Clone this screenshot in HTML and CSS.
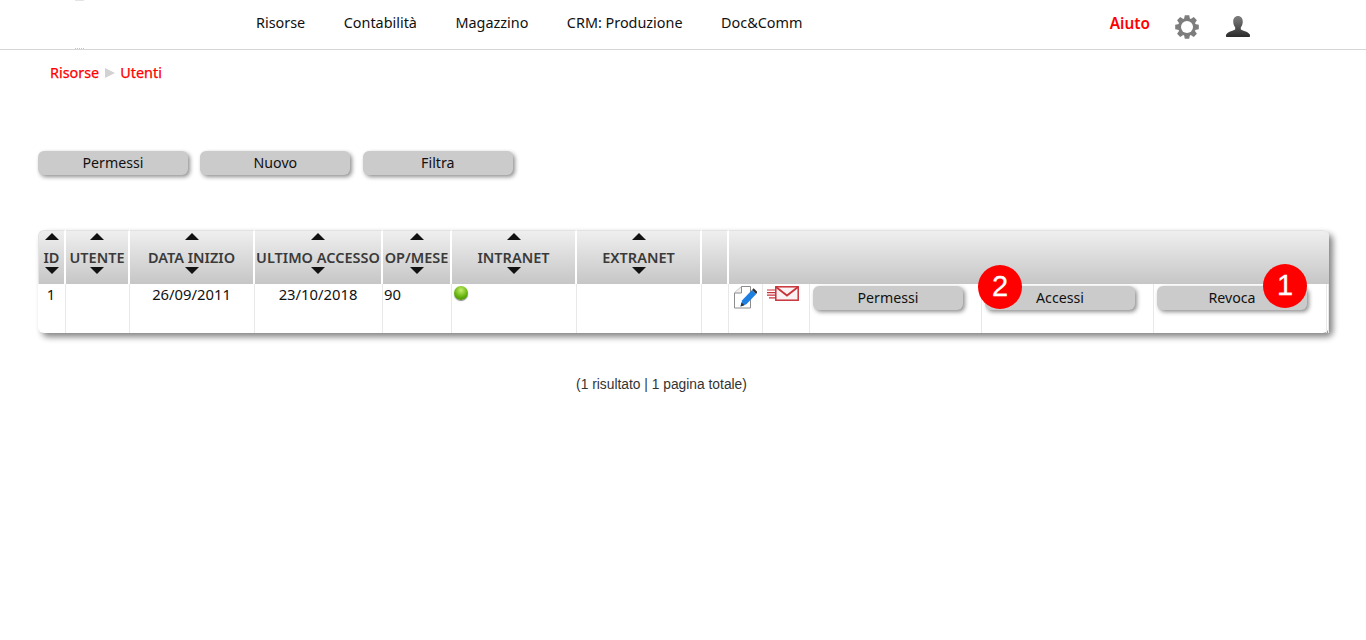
FILE: index.html
```html
<!DOCTYPE html>
<html lang="it">
<head>
<meta charset="utf-8">
<title>Utenti</title>
<link rel="stylesheet" href="styles.css">
</head>
<body>
<header class="topbar">
  <span class="logo-marks"></span>
  <nav class="mainnav">
    <a>Risorse</a><a>Contabilità</a><a>Magazzino</a><a>CRM: Produzione</a><a>Doc&amp;Comm</a>
  </nav>
  <div class="tools">
    <a class="help">Aiuto</a>
    <svg class="gear" width="26" height="26" viewBox="0 0 26 26"><g fill="#7d7d7d"><circle cx="13" cy="13" r="9"/><path d="M10.800 1.200h4.400l.8 4H10z"/><path d="M10.800 1.200h4.400l.8 4H10z" transform="rotate(45 13 13)"/><path d="M10.800 1.200h4.400l.8 4H10z" transform="rotate(90 13 13)"/><path d="M10.800 1.200h4.400l.8 4H10z" transform="rotate(135 13 13)"/><path d="M10.800 1.200h4.400l.8 4H10z" transform="rotate(180 13 13)"/><path d="M10.800 1.200h4.400l.8 4H10z" transform="rotate(225 13 13)"/><path d="M10.800 1.200h4.400l.8 4H10z" transform="rotate(270 13 13)"/><path d="M10.800 1.200h4.400l.8 4H10z" transform="rotate(315 13 13)"/></g><circle cx="13" cy="13" r="6" fill="#fff"/></svg>
    <svg class="user" width="26" height="24" viewBox="0 0 26 24"><defs><linearGradient id="ug" x1="0" y1="0" x2="0" y2="1"><stop offset="0" stop-color="#808080"/><stop offset="1" stop-color="#2b2b2b"/></linearGradient></defs><path fill="url(#ug)" d="M13 1c3 0 4.800 2.400 4.800 5.600 0 2.600-1 4.600-2 5.800v2c1 1 7.200 1.800 9 5.200.4.900.2 1.900-.1 2.400H1.300c-.3-.5-.5-1.500-.1-2.400 1.800-3.400 8-4.200 9-5.200v-2c-1-1.200-2-3.200-2-5.800C8.200 3.400 10 1 13 1z"/></svg>
  </div>
</header>
<div class="crumbs"><a>Risorse</a><span class="sep"></span><a>Utenti</a></div>
<div class="actions">
  <button class="btn">Permessi</button><button class="btn">Nuovo</button><button class="btn">Filtra</button>
</div>
<div class="tablewrap">
<table class="grid">
  <colgroup>
    <col class="c1"><col class="c2"><col class="c3"><col class="c4"><col class="c5"><col class="c6"><col class="c7"><col class="c8"><col class="c9"><col class="c10"><col class="c11"><col class="c12"><col class="c13"><col class="c14">
  </colgroup>
  <thead>
    <tr>
      <th><i class="up"></i><span>ID</span><i class="down"></i></th>
      <th><i class="up"></i><span>UTENTE</span><i class="down"></i></th>
      <th><i class="up"></i><span>DATA INIZIO</span><i class="down"></i></th>
      <th><i class="up"></i><span>ULTIMO ACCESSO</span><i class="down"></i></th>
      <th><i class="up"></i><span>OP/MESE</span><i class="down"></i></th>
      <th><i class="up"></i><span>INTRANET</span><i class="down"></i></th>
      <th><i class="up"></i><span>EXTRANET</span><i class="down"></i></th>
      <th></th>
      <th colspan="6" class="last"></th>
    </tr>
  </thead>
  <tbody>
    <tr>
      <td class="center">1</td>
      <td></td>
      <td class="center">26/09/2011</td>
      <td class="center">23/10/2018</td>
      <td>90</td>
      <td><i class="led"></i></td>
      <td></td>
      <td></td>
      <td class="ic"><svg width="24" height="26" viewBox="0 0 24 26"><path d="M8.500 1.500h9v21.500H1.500V8z" fill="#fff" stroke="#8c8c8c"/><path d="M8.500 1.500V8h-7" fill="#f0f0f0" stroke="#8c8c8c"/><path d="M7.500 21.500l1.700-6.200L19 5l4.200 4-9.800 10.300z" fill="#1f7fe0"/><path d="M19 5l1.600-1.700L24.500 7l-1.300 2z" fill="#333"/><path d="M7.500 21.500l1-4 3 2.700z" fill="#333"/></svg></td>
      <td class="ic"><svg width="32" height="18" viewBox="0 0 32 18"><g fill="none" stroke="#c8333a"><rect x="8.800" y="1.800" width="22.400" height="13.400" fill="#fbf3f3" stroke-width="1.500"/><path d="M9 2l11 8.500L31 2" stroke-width="1.800"/><path d="M0 5h9M0 7.600h9M0 10.200h9M2 12.800h7" stroke-width="1.200"/></g></svg></td>
      <td class="bc"><button class="btn">Permessi</button></td>
      <td class="bc"><button class="btn">Accessi</button></td>
      <td class="bc"><button class="btn">Revoca</button></td>
      <td></td>
    </tr>
  </tbody>
</table>
<span class="badge b1">1</span>
<span class="badge b2">2</span>
</div>
<p class="pager">(1 risultato | 1 pagina totale)</p>
</body>
</html>
```
FILE: styles.css
```css
* { box-sizing: border-box; }
html, body { margin: 0; padding: 0; background: #fff; }
body { font-family: "Noto Sans", "Open Sans", sans-serif; font-size: 14px; color: #111; min-height: 640px; overflow: hidden; }
.topbar { position: relative; height: 50px; border-bottom: 1px solid #d6d6d6; display: flex; align-items: center; justify-content: space-between; padding: 0 115px 0 256px; }
.logo-marks { position: absolute; left: 75px; top: 0; width: 9px; height: 49px; border-top: 1px solid #e4e4e4; border-bottom: 1px dotted #c4c4c4; }
.mainnav { display: flex; gap: 38.5px; font-size: 14.4px; margin-top: -4px; }
.tools { display: flex; align-items: center; }
.help { color: #f00; font-size: 15.4px; font-weight: 600; margin-right: 24px; margin-top: -2px; }
.gear { margin-right: 25px; margin-top: 4px; }
.user { margin-top: 5px; }
.crumbs { display: flex; align-items: center; color: #f00; padding-left: 50px; height: 20px; margin-top: 12px; font-size: 14.4px; -webkit-text-stroke: 0.25px #f00; }
.crumbs .sep { width: 0; height: 0; margin: 1px 5px 0 6px; border-left: 10px solid #d2d2d2; border-top: 5px solid transparent; border-bottom: 5px solid transparent; }
.actions { display: flex; gap: 12.4px; padding-left: 38px; margin-top: 69px; }
.btn { display: block; width: 150px; height: 24px; border: 0; padding: 0; background: #cbcbcb; border-radius: 6px; box-shadow: 2px 2px 4px #8f8f8f; font: inherit; font-size: 14.2px; color: #111; line-height: 24px; }
.tablewrap { position: relative; width: 1291px; height: 103px; margin: 55px 0 0 38px; border-radius: 6px; box-shadow: 4px 4px 6px #868686; background: #fff; }
.grid { table-layout: fixed; width: 1291px; border-collapse: separate; border-spacing: 0; }
.c1 { width: 28px; } .c2 { width: 64px; } .c3 { width: 125px; } .c4 { width: 128px; } .c5 { width: 69px; } .c6 { width: 125px; } .c7 { width: 125px; } .c8 { width: 27px; } .c9 { width: 34px; } .c10 { width: 47px; } .c11 { width: 172px; } .c12 { width: 172px; } .c13 { width: 173px; } .c14 { width: 2px; }
.grid th { height: 54px; padding: 0; background: linear-gradient(#efefef, #c6c6c6); border-right: 2px solid #fff; border-top: 1px solid #e2e2e2; font-size: 14.5px; font-weight: 600; color: #3a3a3a; text-align: center; vertical-align: top; white-space: nowrap; overflow: visible; }
.grid th:first-child { border-top-left-radius: 6px; border-left: 1px solid #e2e2e2; }
.grid th.last { border-right: 0; border-top-right-radius: 6px; }
.grid th span { display: block; height: 19px; line-height: 18px; }
.up, .down { display: block; width: 0; height: 0; margin: 0 auto; border-left: 7.500px solid transparent; border-right: 7.500px solid transparent; }
.up { border-bottom: 7px solid #111; margin-top: 2px; margin-bottom: 8px; }
.down { border-top: 7.500px solid #111; margin-top: 0; }
.grid td { height: 49px; padding: 1px 2px 0 1px; border-right: 1px solid #e8e8e8; vertical-align: top; line-height: 18px; font-size: 14.8px; }
.center { text-align: center; }
.ic { padding: 1px 0 0 4px !important; }
.ic svg { display: block; }
.bc { padding: 2px 0 0 3px !important; }
.led { display: block; width: 14px; height: 14px; margin-top: 1px; margin-left: 1px; border-radius: 50%; background: radial-gradient(circle at 50% 30%, #c4ee6a, #66b40e 55%, #3a7a08); box-shadow: 0 1px 1px #888; }
.badge { position: absolute; width: 44px; height: 44px; border-radius: 50%; background: #f00; color: #fff; font: 29px/42px "Liberation Sans", Arial, sans-serif; -webkit-text-stroke: 0.3px #fff; text-align: center; }
.b1 { left: 1225px; top: 34px; }
.b2 { left: 940px; top: 35px; }
.pager { margin: 45px 0 0; width: 1323px; text-align: center; font: 13.8px/14px "Liberation Sans", Arial, sans-serif; color: #333; }
```
